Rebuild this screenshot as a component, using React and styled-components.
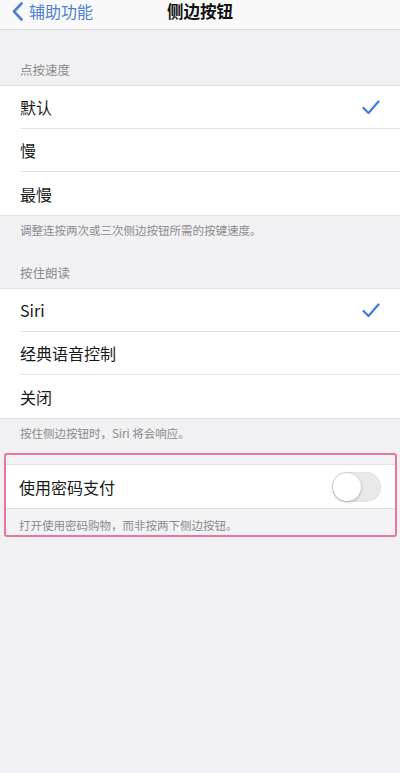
import React, { useState } from "react";
import styled, { createGlobalStyle } from "styled-components";

const GlobalStyle = createGlobalStyle`
  html, body {
    margin: 0;
    padding: 0;
    background: #f1f1f3;
  }
  body {
    font-family: "Noto Sans CJK SC", "Liberation Sans", sans-serif;
  }
`;

const Page = styled.div`
  width: 400px;
  min-height: 773px;
  background: #f1f1f3;
`;

const NavBar = styled.div`
  position: relative;
  display: flex;
  align-items: flex-start;
  height: 30px;
  padding-top: 1px;
  background: #f9f9f9;
  border-bottom: 1px solid #d6d6da;
  box-sizing: border-box;
`;

const BackButton = styled.div`
  display: flex;
  align-items: center;
  gap: 6px;
  height: 20px;
  padding-left: 12px;
  color: #4d80d4;
  font-size: 16px;
  line-height: 20px;
`;

const Title = styled.div`
  position: absolute;
  left: 0;
  right: 0;
  top: 1px;
  text-align: center;
  font-size: 16.5px;
  font-weight: 700;
  line-height: 20px;
  color: #111;
`;

const SectionHeader = styled.div`
  display: flex;
  align-items: flex-end;
  height: ${(p) => p.height}px;
  padding: 0 20px 6px;
  box-sizing: border-box;
  font-size: 12.5px;
  color: #8a8a8e;
`;

const Group = styled.div`
  background: #fff;
  border-top: 1px solid #e0e0e4;
  border-bottom: 1px solid #e0e0e4;
`;

const Row = styled.div`
  display: flex;
  align-items: center;
  justify-content: space-between;
  height: 43px;
  margin-left: ${(p) => p.indent || 20}px;
  padding-right: ${(p) => p.right || 20}px;
  box-sizing: border-box;
  border-bottom: ${(p) => (p.last ? "none" : "1px solid #e4e4e8")};
  font-size: 16px;
  color: #1a1a1a;
`;

const Footer = styled.div`
  padding: ${(p) => p.pad || "6px 20px 0"};
  font-size: 11.5px;
  line-height: 16px;
  color: #8a8a8e;
`;

const Highlight = styled.div`
  margin: 12px 3px 0 4px;
  border: 2.5px solid #e9779d;
  border-radius: 3px;
  padding: 9px 0 2px;
  background: #f3f3f5;
`;

const SwitchTrack = styled.div`
  position: relative;
  width: 49px;
  height: 30px;
  border-radius: 15px;
  background: #e9e9eb;
  box-shadow: inset 0 0 0 1px #e2e2e6;
`;

const SwitchKnob = styled.div`
  position: absolute;
  left: 1px;
  top: 1px;
  width: 28px;
  height: 28px;
  border-radius: 50%;
  background: #fff;
  box-shadow: 0 1px 3px rgba(0, 0, 0, 0.25), 0 0 0 0.5px rgba(0, 0, 0, 0.06);
`;

const Check = () => (
  <svg width="18" height="15" viewBox="0 0 18 15">
    <path
      d="M1.5 8 L6.5 13 L16.5 1.5"
      fill="none"
      stroke="#3d7ddc"
      strokeWidth="2.2"
      strokeLinecap="round"
      strokeLinejoin="round"
    />
  </svg>
);

const Chevron = () => (
  <svg width="11" height="19" viewBox="0 0 11 19">
    <path
      d="M9.5 1.5 L2 9.5 L9.5 17.5"
      fill="none"
      stroke="#4d80d4"
      strokeWidth="2.6"
      strokeLinecap="round"
      strokeLinejoin="round"
    />
  </svg>
);

const speeds = ["默认", "慢", "最慢"];
const holdOptions = ["Siri", "经典语音控制", "关闭"];

const App = () => {
  const [speed, setSpeed] = useState("默认");
  const [hold, setHold] = useState("Siri");

  return (
    <Page>
      <GlobalStyle />
      <NavBar>
        <BackButton>
          <Chevron />
          辅助功能
        </BackButton>
        <Title>侧边按钮</Title>
      </NavBar>

      <SectionHeader height={55}>点按速度</SectionHeader>
      <Group>
        {speeds.map((s, i) => (
          <Row key={s} last={i === speeds.length - 1} onClick={() => setSpeed(s)}>
            {s}
            {speed === s && <Check />}
          </Row>
        ))}
      </Group>
      <Footer>调整连按两次或三次侧边按钮所需的按键速度。</Footer>

      <SectionHeader height={50}>按住朗读</SectionHeader>
      <Group>
        {holdOptions.map((s, i) => (
          <Row key={s} last={i === holdOptions.length - 1} onClick={() => setHold(s)}>
            {s}
            {hold === s && <Check />}
          </Row>
        ))}
      </Group>
      <Footer>按住侧边按钮时，Siri 将会响应。</Footer>

      <Highlight>
        <Group>
          <Row last indent={13} right={14}>
            使用密码支付
            <SwitchTrack>
              <SwitchKnob />
            </SwitchTrack>
          </Row>
        </Group>
        <Footer pad="8px 13px 0">打开使用密码购物，而非按两下侧边按钮。</Footer>
      </Highlight>
    </Page>
  );
};

export default App;
